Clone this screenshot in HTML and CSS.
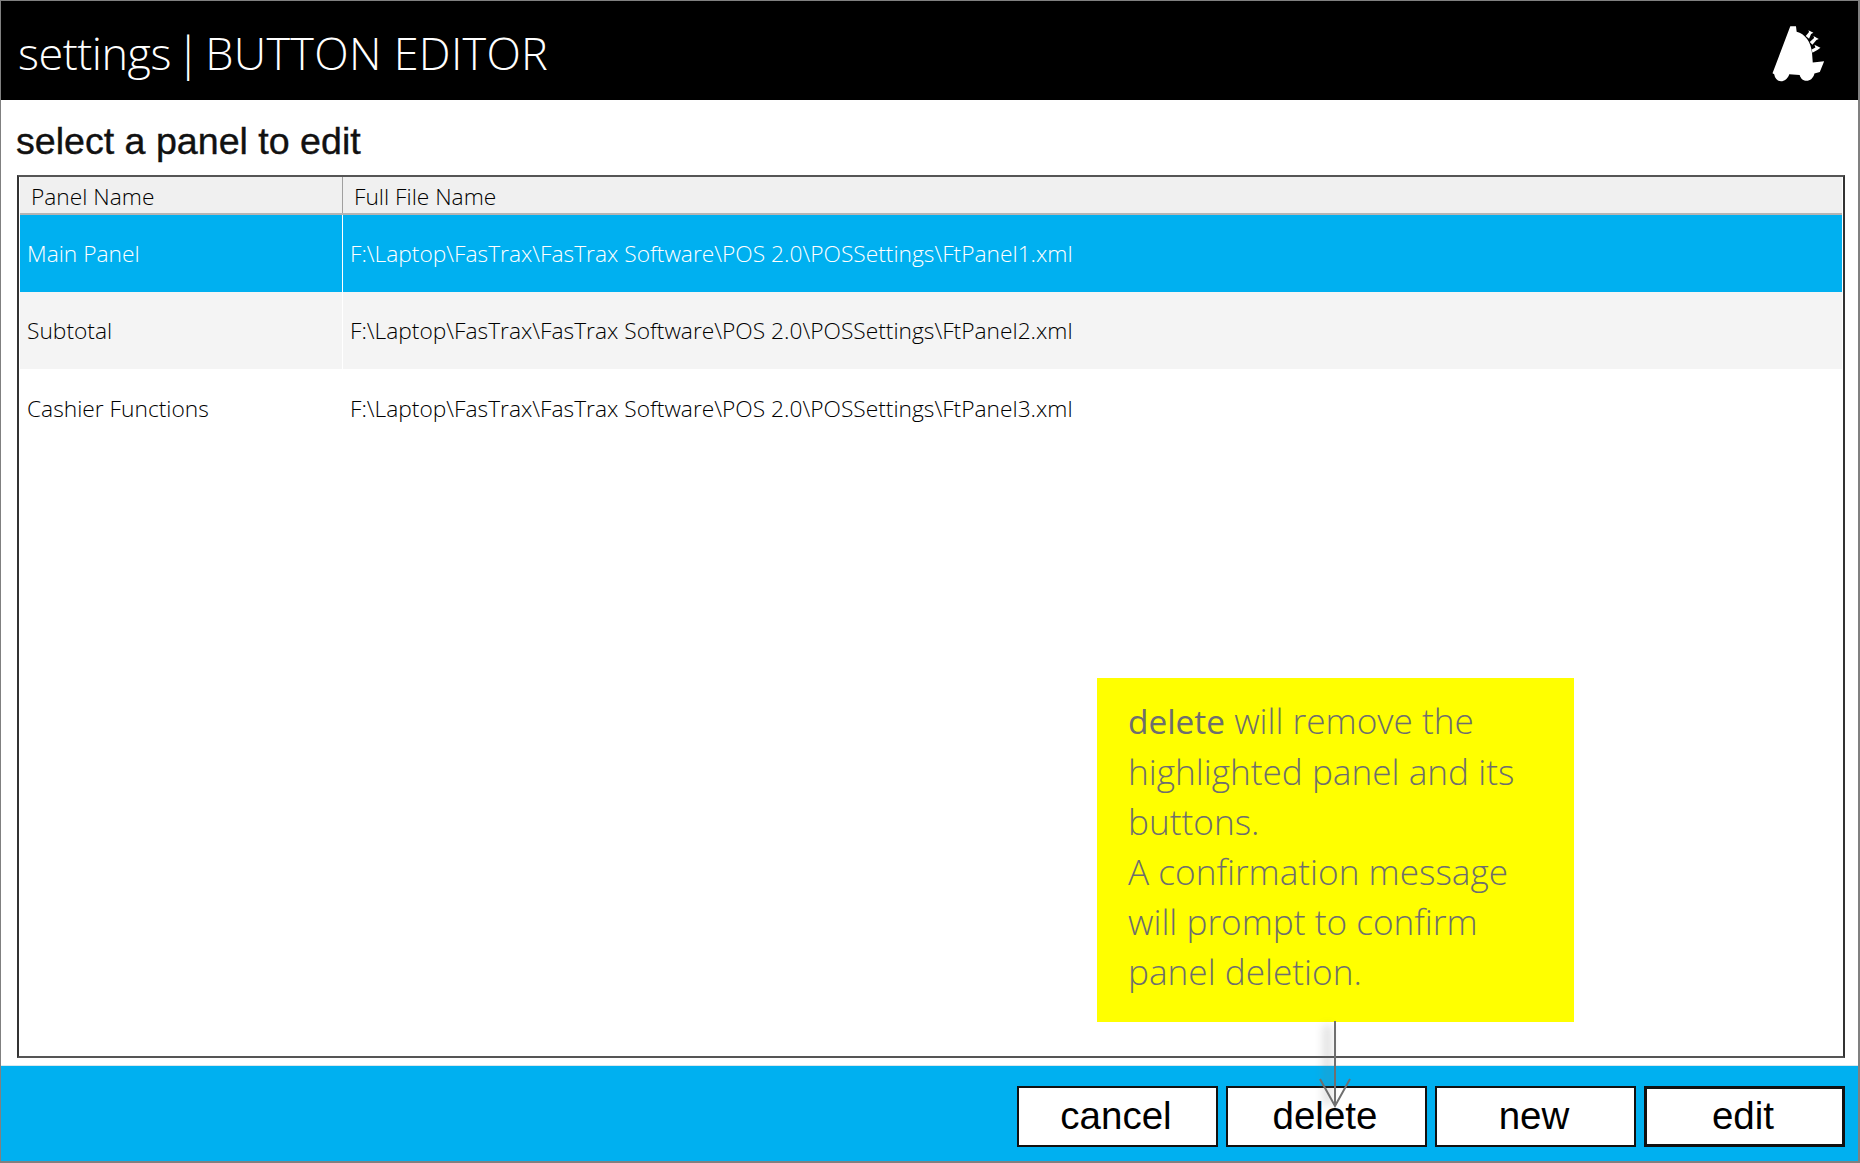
FILE: index.html
```html
<!DOCTYPE html>
<html lang="en">
<head>
<meta charset="utf-8">
<title>settings | BUTTON EDITOR</title>
<link rel="stylesheet" href="styles.css">
</head>
<body>
<div class="app">
  <header class="topbar">
    <h1 class="title">settings <span class="title-sep">|</span> <span class="title-main">BUTTON EDITOR</span></h1>
    <svg class="logo" viewBox="100 78 155 170" aria-hidden="true">
      <path class="logo-body" d="M153 79 L170 79 L172 95 C196 100 216 126 218 160 L220 187 L254 183 L241 215 L225 220 C220 246 188 250 181 224 L150 222 C141 250 109 250 105 222 L100 219 Z"/>
      <path class="logo-peg" d="M199 108 L209 96 L207 91 L222 98 L215 102 L209 116 Z M211 126 L224 114 L222 108 L238 117 L231 120 L219 134 Z M217 148 L228 142 L225 134 L243 143 L235 149 L219 158 Z"/>
    </svg>
  </header>
  <main class="content">
    <h2 class="heading">select a panel to edit</h2>
    <div class="grid">
      <div class="row head">
        <div class="cell">Panel Name</div>
        <div class="cell">Full File Name</div>
      </div>
      <div class="row item selected">
        <div class="cell">Main Panel</div>
        <div class="cell">F:\Laptop\FasTrax\FasTrax Software\POS 2.0\POSSettings\FtPanel1.xml</div>
      </div>
      <div class="row item alt">
        <div class="cell">Subtotal</div>
        <div class="cell">F:\Laptop\FasTrax\FasTrax Software\POS 2.0\POSSettings\FtPanel2.xml</div>
      </div>
      <div class="row item last">
        <div class="cell">Cashier Functions</div>
        <div class="cell">F:\Laptop\FasTrax\FasTrax Software\POS 2.0\POSSettings\FtPanel3.xml</div>
      </div>
    </div>
  </main>
  <footer class="actions">
    <button class="btn" type="button">cancel</button>
    <button class="btn" type="button">delete</button>
    <button class="btn" type="button">new</button>
    <button class="btn default" type="button">edit</button>
  </footer>
  <aside class="note">
    <span class="note-key">delete</span> will remove the<br>
    highlighted panel and its<br>
    buttons.<br>
    A confirmation message<br>
    will prompt to confirm<br>
    panel deletion.
  </aside>
  <svg class="arrow" viewBox="0 0 40 90" aria-hidden="true">
    <defs><filter id="soft" x="-200%" width="500%"><feGaussianBlur stdDeviation="4"/></filter></defs>
    <rect class="arrow-shadow" x="8" y="4" width="9" height="80" filter="url(#soft)"/>
    <path class="arrow-line" d="M20 0 V85 M5 58 L20 85 L35 58"/>
  </svg>
</div>
</body>
</html>
```
FILE: styles.css
```css
* { box-sizing: border-box; }
html, body { margin: 0; padding: 0; background: #fff; }
.app {
  position: relative;
  width: 1860px;
  height: 1163px;
  display: flex;
  flex-direction: column;
  border: 1px solid #808080;
  border-width: 1px 2px 2px 1px;
  overflow: hidden;
}
.topbar {
  height: 99px;
  flex: none;
  background: #000;
  color: #fff;
  display: flex;
  align-items: center;
  justify-content: space-between;
  padding: 0 33px 0 17px;
}
.title {
  margin: 2px 0 0;
  font: 300 45px/1 "Open Sans", sans-serif;
  letter-spacing: -0.5px;
  word-spacing: -6.2px;
}
.title-sep { font-size: 46px; }
.title-main { letter-spacing: 0.3px; word-spacing: 0; }
.logo { width: 53px; height: 57px; margin-top: 8px; }
.logo-body, .logo-peg { fill: #fff; }
.content {
  flex: 1;
  display: flex;
  flex-direction: column;
  padding: 0 13px 7px 16px;
}
.heading {
  margin: 18px 0 11px -1px;
  font: 400 37.6px/46px "Liberation Sans", Arial, sans-serif;
  color: #111;
  -webkit-text-stroke: 0.4px #111;
}
.grid {
  flex: 1;
  border: 2px solid #404040;
  border-color: #555 #333 #555 #333;
  background: #fff;
  font: 300 22.75px/1 "Open Sans", sans-serif;
  color: #000;
  padding: 0 1px;
}
.row {
  display: grid;
  grid-template-columns: 322px 1fr;
}
.head {
  height: 38px;
  background: #f0f0f0;
  border-bottom: 2px solid #b4b4b4;
}
.head .cell {
  display: flex;
  align-items: center;
  padding: 4px 0 0 11px;
}
.head .cell + .cell { border-left: 1px solid #a0a0a0; padding-left: 11px; }
.item { height: 77px; }
.item .cell {
  display: flex;
  align-items: center;
  padding: 2px 0 0 7px;
}
.last .cell { padding-top: 4px; }
.item .cell + .cell { border-left: 1px solid transparent; }
.selected { background: #00b0f0; color: #fff; }
.selected .cell + .cell { border-left-color: #fff; }
.alt { background: #f4f4f4; }
.alt .cell + .cell { border-left-color: #fff; }
.actions {
  height: 96px;
  flex: none;
  background: #00b0f0;
  border-top: 1px solid #d8e8ee;
  display: flex;
  justify-content: flex-end;
  gap: 8px;
  padding: 20px 13px 0 0;
}
.btn {
  width: 201px;
  height: 61px;
  padding: 0 3px 0 0;
  border: 2px solid #111;
  background: #fff;
  color: #000;
  font: 400 38.5px/1 "Liberation Sans", Arial, sans-serif;
}
.btn.default { border-width: 3px; }
.note {
  position: absolute;
  left: 1096px;
  top: 677px;
  width: 477px;
  height: 344px;
  padding: 17px 0 0 31px;
  background: #ff0;
  color: #6e6e6e;
  font: 300 35.2px/50px "Open Sans", sans-serif;
  white-space: nowrap;
}
.note-key { font-weight: 400; font-size: 33.4px; }
.arrow {
  position: absolute;
  left: 1314px;
  top: 1020px;
  width: 40px;
  height: 90px;
  overflow: visible;
}
.arrow-shadow { fill: #777; opacity: .22; }
.arrow-line { fill: none; stroke: #6f6f6f; stroke-width: 2; }
```
